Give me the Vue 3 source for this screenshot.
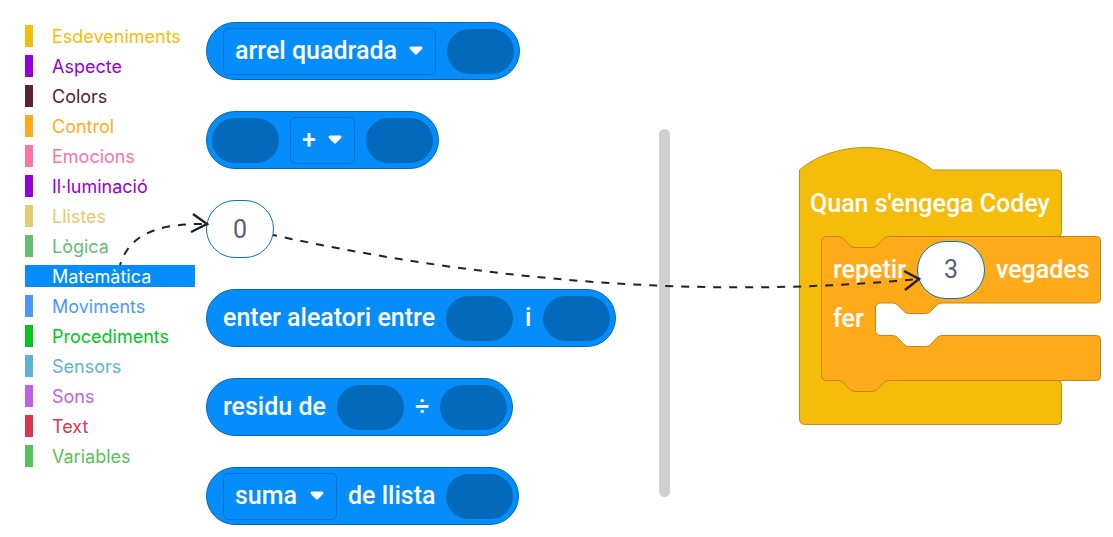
<script setup>
import { ref } from 'vue'

const selected = ref('Matemàtica')
const number = ref('0')
const times = ref('3')

const categories = [
  { name: 'Esdeveniments', color: '#f5bc09' },
  { name: 'Aspecte', color: '#9400d8' },
  { name: 'Colors', color: '#5c2231', text: '#4f2233' },
  { name: 'Control', color: '#ffab19' },
  { name: 'Emocions', color: '#fb74a2' },
  { name: 'Il·luminació', color: '#9400d8' },
  { name: 'Llistes', color: '#e3cb70' },
  { name: 'Lògica', color: '#65bc73' },
  { name: 'Matemàtica', color: '#048dfb' },
  { name: 'Moviments', color: '#4c97ff' },
  { name: 'Procediments', color: '#00c420' },
  { name: 'Sensors', color: '#5cb1d6' },
  { name: 'Sons', color: '#bb62e6' },
  { name: 'Text', color: '#d63852' },
  { name: 'Variables', color: '#59c059' },
]

const blocks = [
  [{ type: 'select', value: 'arrel quadrada' }, { type: 'slot' }],
  [{ type: 'slot' }, { type: 'select', value: '+' }, { type: 'slot' }],
  null,
  [{ type: 'text', value: 'enter aleatori entre' }, { type: 'slot' }, { type: 'text', value: 'i' }, { type: 'slot' }],
  [{ type: 'text', value: 'residu de' }, { type: 'slot' }, { type: 'text', value: '÷' }, { type: 'slot' }],
  [{ type: 'select', value: 'suma' }, { type: 'text', value: 'de llista' }, { type: 'slot' }],
]
</script>

<template>
  <main class="editor">
    <nav class="categories" aria-label="Categories">
      <button
        v-for="c in categories"
        :key="c.name"
        type="button"
        class="category"
        :class="{ active: selected === c.name }"
        :style="{ '--swatch': c.color, '--label': c.text || c.color }"
        @click="selected = c.name"
      >{{ c.name }}</button>
    </nav>

    <section class="palette" aria-label="Blocs">
      <template v-for="(block, i) in blocks" :key="i">
        <input v-if="!block" v-model="number" class="bubble" aria-label="Nombre" />
        <div v-else class="block" :class="{ 'slot-first': block[0].type === 'slot' }">
          <template v-for="(part, j) in block" :key="j">
            <span v-if="part.type === 'slot'" class="slot"></span>
            <label v-else-if="part.type === 'select'" class="dropdown">
              <select aria-label="Operació">
                <option>{{ part.value }}</option>
              </select>
              <svg width="16" height="12" viewBox="0 0 16 12" aria-hidden="true">
                <path d="M3 3H13L8 8Z" fill="#fff" stroke="#fff" stroke-width="3" stroke-linejoin="round" />
              </svg>
            </label>
            <span v-else class="word">{{ part.value }}</span>
          </template>
        </div>
      </template>
    </section>

    <div class="scrollbar"></div>

    <section class="workspace" aria-label="Programa">
      <div class="program">
        <svg class="shape" width="305" height="280" viewBox="798 147 305 280" aria-hidden="true">
          <path
            d="M799.5 170c34.500-30 98.500-30 133 0H1057.500a4 4 0 0 1 4 4V232.500a4 4 0 0 1-4 4H900V252H825V380.500H1057.500a4 4 0 0 1 4 4V420.500a4 4 0 0 1-4 4H804.500a5 5 0 0 1-5-5Z"
            fill="#f5bc09" stroke="#b8901a"
          />
          <path
            d="M821.5 241.500a5 5 0 0 1 5-5H838q3 0 5 2l7 7q2 2 5 2H872q3 0 5-2l7-7q2-2 5-2H1096.500a4 4 0 0 1 4 4V299a4 4 0 0 1-4 4H942q-3 0-5 2l-6.500 6.500q-2 2-5 2H909q-3 0-5-2L897.500 305q-2-2-5-2H880.500a5 5 0 0 0-5 5V330.500a5 5 0 0 0 5 5H892.500q3 0 5 2l6.500 7q2 2 5 2H925.500q3 0 5-2l6.500-7q2-2 5-2H1096.500a4 4 0 0 1 4 4V376.500a4 4 0 0 1-4 4H889q-3 0-5 2l-7 7q-2 2-5 2H855q-3 0-5-2l-7-7q-2-2-5-2H826.500a5 5 0 0 1-5-5Z"
            fill="#ffab19" stroke="#c4841b"
          />
        </svg>
        <div class="content">
          <div class="event">Quan s'engega Codey</div>
          <div class="row repeat">
            <span>repetir</span>
            <input v-model="times" class="bubble" aria-label="Vegades" />
            <span>vegades</span>
          </div>
          <div class="row do">fer</div>
        </div>
      </div>
    </section>

    <svg class="arrows" width="1113" height="537" viewBox="0 0 1113 537" aria-hidden="true">
      <g fill="none" stroke="#222" stroke-width="2">
        <path d="M120 265C128 240 148 223 206 224" stroke-dasharray="8 8" stroke-dashoffset="5" />
        <path d="M193 214L207 224L191 232" stroke-width="2.500" />
        <path d="M273 235C480 280 700 300 918 279" stroke-dasharray="8 8" stroke-dashoffset="4" />
        <path d="M904 271L919 279L905 290" stroke-width="2.500" />
      </g>
    </svg>
  </main>
</template>

<style>
body {
  background: #fff;
}
</style>

<style scoped>
.editor {
  position: relative;
  display: grid;
  grid-template-columns: 170px 442px 11px 1fr;
  column-gap: 11px;
  align-items: start;
  padding: 22px 0 12px 25px;
  font-family: Roboto, "Liberation Sans", sans-serif;
  font-size: 25px;
  line-height: 32px;
  color: #fff;
}

.categories {
  display: flex;
  flex-direction: column;
  gap: 8px;
  padding-top: 3px;
}

.category {
  height: 22px;
  padding: 2px 0 0 19px;
  border: 0;
  border-left: 8px solid var(--swatch);
  background: none;
  color: var(--label);
  font-family: Inter, "Liberation Sans", sans-serif;
  font-size: 18px;
  line-height: 20px;
  text-align: left;
  cursor: pointer;
}

.category.active {
  background: var(--swatch);
  color: #fff;
}

.palette {
  display: flex;
  flex-direction: column;
  align-items: flex-start;
  gap: 31px;
}

.block {
  display: flex;
  align-items: center;
  gap: 11px;
  box-sizing: border-box;
  height: 58px;
  padding: 0 5px 0 16px;
  border: 1px solid #0569b8;
  border-radius: 29px;
  background: #048dfb;
  font-weight: 500;
  white-space: nowrap;
}

.block.slot-first {
  padding-left: 5px;
}

.slot {
  width: 67px;
  height: 45px;
  border-radius: 23px;
  background: #0269bb;
}

.word {
  min-width: 8px;
  text-align: center;
}

.dropdown {
  display: flex;
  align-items: center;
  gap: 11px;
  box-sizing: border-box;
  height: 47px;
  padding: 0 11px;
  border: 1px solid #0573cd;
  border-radius: 5px;
}

.dropdown select {
  appearance: none;
  padding: 0;
  border: 0;
  background: none;
  color: #fff;
  font: inherit;
}

.bubble {
  box-sizing: border-box;
  width: 68px;
  height: 58px;
  padding: 0;
  border: 1px solid #0573c5;
  border-radius: 29px;
  background: #fff;
  color: #575e75;
  font: inherit;
  font-weight: 400;
  text-align: center;
}

.scrollbar {
  height: 368px;
  margin-top: 107px;
  border-radius: 6px;
  background: #d0d0d0;
}

.workspace {
  padding: 125px 11px 0 117px;
}

.program {
  display: grid;
  font-weight: 500;
  white-space: nowrap;
}

.shape,
.content {
  grid-area: 1 / 1;
}

.content {
  padding-top: 24px;
}

.event {
  padding-left: 12px;
  line-height: 65px;
}

.row {
  display: flex;
  align-items: center;
  gap: 11px;
  padding-left: 35px;
}

.repeat {
  height: 67px;
}

.arrows {
  position: absolute;
  top: 0;
  left: 0;
  pointer-events: none;
}
</style>
